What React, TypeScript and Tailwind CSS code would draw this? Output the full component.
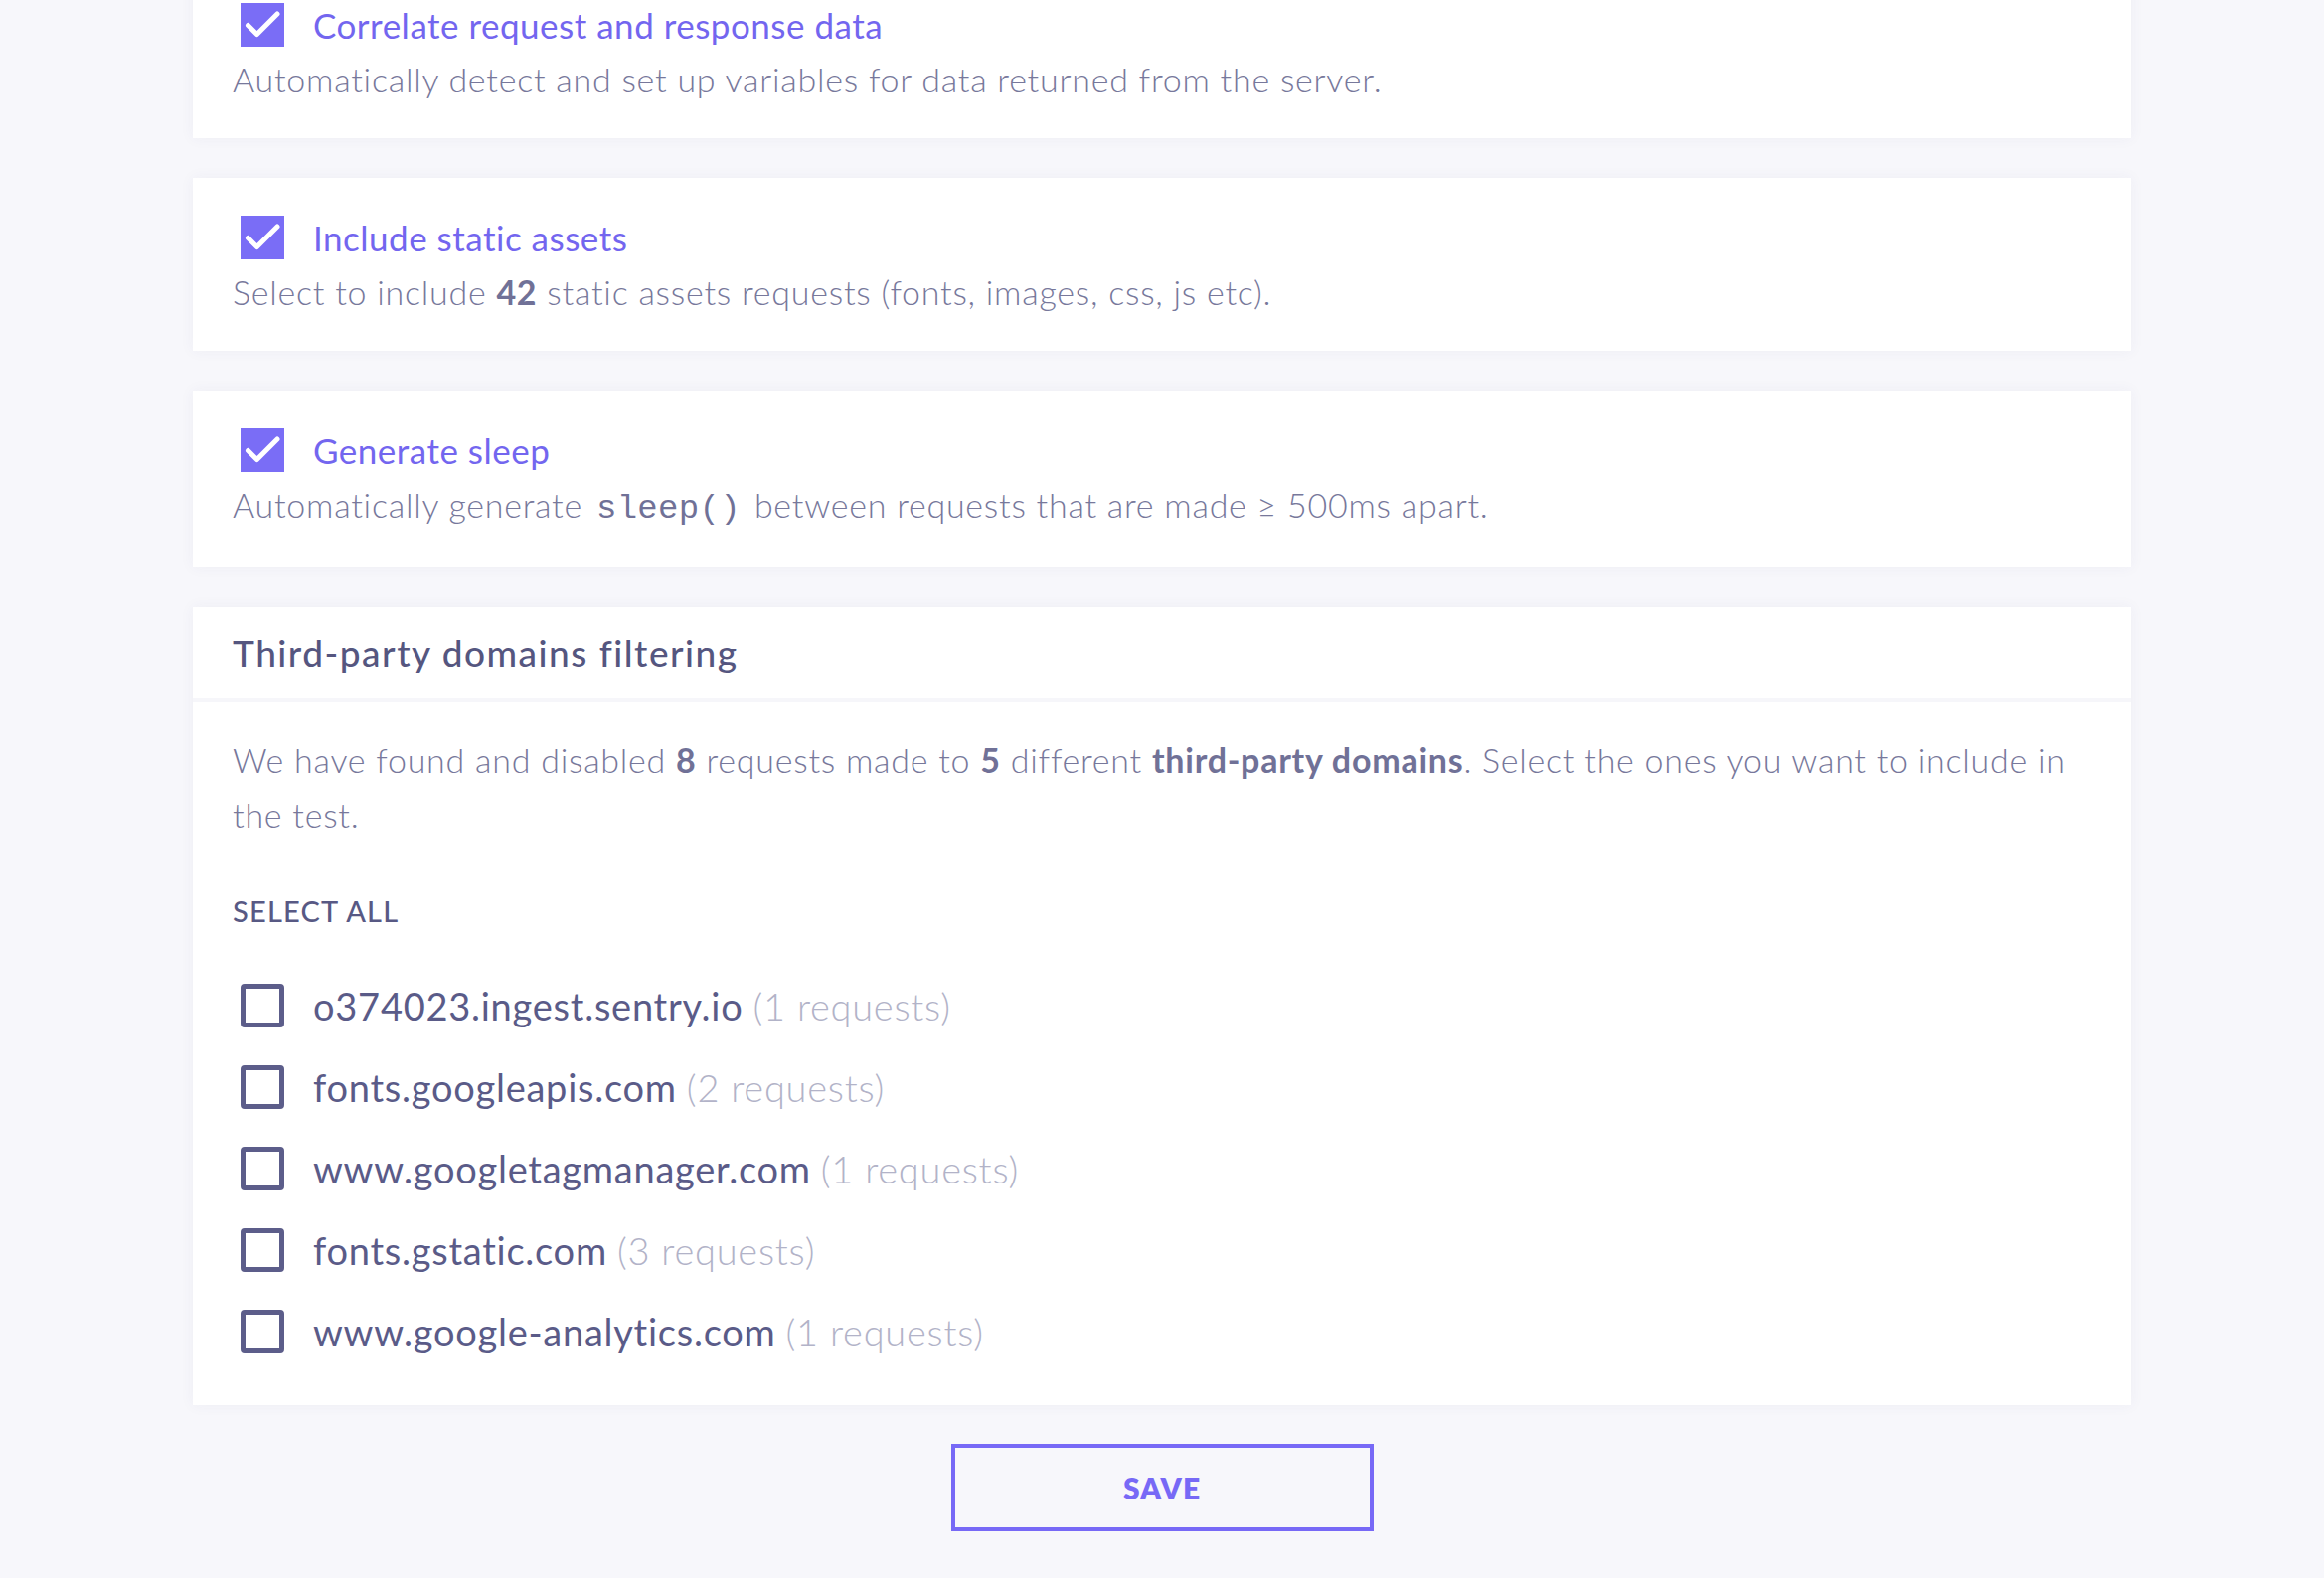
import React from "react";

const CheckedBox = () => (
  <div className="w-[44px] h-[44px] bg-[#7a6df6] flex items-center justify-center shrink-0">
    <svg width="44" height="44" viewBox="0 0 44 44" fill="none">
      <path d="M7.5 22.5 L16.5 31.5 L37 11" stroke="#ffffff" strokeWidth="5" strokeLinecap="round" strokeLinejoin="round" />
    </svg>
  </div>
);

const EmptyBox = () => (
  <div className="w-[44px] h-[44px] border-[5px] border-[#5c5d8a] rounded-[4px] shrink-0" />
);

const OptionCard = ({ title, children }: { title: string; children: React.ReactNode }) => (
  <div className="bg-white shadow-[0_0_14px_rgba(60,60,120,0.05)] pt-[38px] pb-[34px] px-[40px]">
    <div className="flex items-center h-[44px] pl-[8px]">
      <CheckedBox />
      <span className="ml-[29px] text-[35px] tracking-[0.5px] text-[#7366ef] font-normal">{title}</span>
    </div>
    <p className="mt-[8px] leading-[50px] text-[34px] tracking-[0.75px] font-light text-[#77789b]">{children}</p>
  </div>
);

const domains = [
  { name: "o374023.ingest.sentry.io", count: 1 },
  { name: "fonts.googleapis.com", count: 2 },
  { name: "www.googletagmanager.com", count: 1 },
  { name: "fonts.gstatic.com", count: 3 },
  { name: "www.google-analytics.com", count: 1 },
];

export default function App() {
  return (
    <div
      className="min-h-screen w-full bg-[#f7f7fb] overflow-hidden"
      style={{ fontFamily: "Lato, 'Open Sans', sans-serif" }}
    >
      <div className="w-[1950px] mx-auto flex flex-col gap-[40px] -mt-[35px]">
        <OptionCard title="Correlate request and response data">
          Automatically detect and set up variables for data returned from the server.
        </OptionCard>
        <OptionCard title="Include static assets">
          Select to include <b className="font-bold text-[#707197]">42</b> static assets requests (fonts, images, css, js etc).
        </OptionCard>
        <OptionCard title="Generate sleep">
          <span>Automatically generate</span>
          <code
            className="inline-block leading-[50px] text-[34px] tracking-[0.3px] text-[#707197] mx-[14px]"
            style={{ fontFamily: "'Liberation Mono', 'DejaVu Sans Mono', monospace" }}
          >
            sleep()
          </code>
          <span>between requests that are made ≥ 500ms apart.</span>
        </OptionCard>

        <div className="bg-white shadow-[0_0_14px_rgba(60,60,120,0.05)]">
          <div className="h-[95px] flex items-center px-[40px] border-b-[4px] border-[#f6f6fa]">
            <h2 className="text-[37px] tracking-[1.5px] font-medium text-[#55567f]">Third-party domains filtering</h2>
          </div>
          <div className="px-[40px] pt-[31px] pb-[33px]">
            <p className="text-[34px] tracking-[0.75px] font-light leading-[55px] text-[#77789b]">
              <span>We have found and disabled</span> <b className="font-bold text-[#707197]">8</b>{" "}
              <span>requests made to</span> <b className="font-bold text-[#707197]">5</b> <span>different</span>{" "}
              <b className="font-bold text-[#707197]">third-party domains</b>
              <span>. Select the ones you want to include in</span> <span>the test.</span>
            </p>
            <div className="mt-[50px] leading-[40px] text-[29px] font-medium tracking-[1.2px] text-[#585984]">SELECT ALL</div>
            <div className="mt-[34px] flex flex-col">
              {domains.map((d) => (
                <div key={d.name} className="h-[82px] flex items-center pl-[8px]">
                  <EmptyBox />
                  <span className="ml-[29px] text-[38px] tracking-[0.75px] text-[#5a5b88]">{d.name}</span>
                  <span className="ml-[10px] text-[38px] tracking-[0.75px] font-light text-[#b2b3c8]">({d.count} requests)</span>
                </div>
              ))}
            </div>
          </div>
        </div>

        <div className="flex justify-center pb-[48px]">
          <button className="w-[425px] h-[88px] border-[4px] border-[#7769f6] bg-transparent text-[#7769f6] text-[30px] font-extrabold tracking-[1px] -mt-[1px]">
            SAVE
          </button>
        </div>
      </div>
    </div>
  );
}
